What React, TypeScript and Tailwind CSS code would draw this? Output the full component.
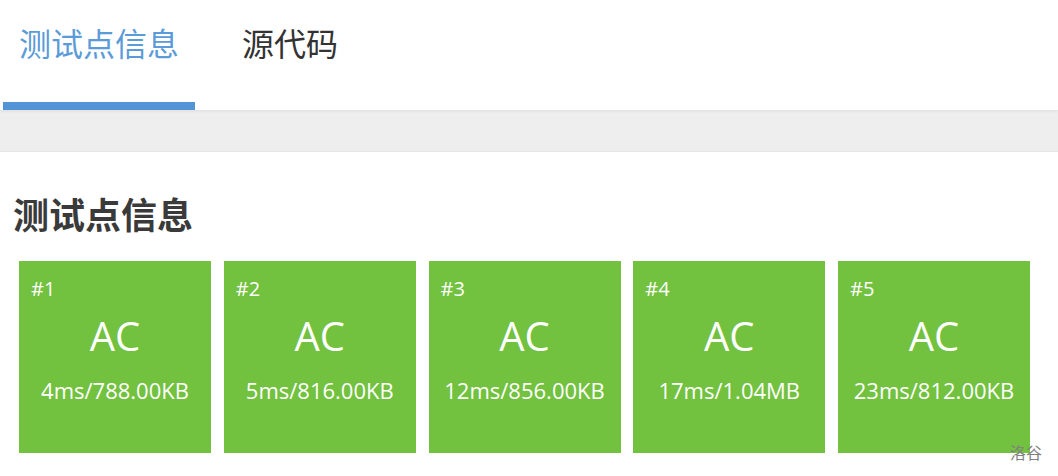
import React from "react";

const cases = [
  { id: 1, info: "4ms/788.00KB" },
  { id: 2, info: "5ms/816.00KB" },
  { id: 3, info: "12ms/856.00KB" },
  { id: 4, info: "17ms/1.04MB" },
  { id: 5, info: "23ms/812.00KB" },
];

const font = { fontFamily: '"Open Sans", "Noto Sans CJK SC", sans-serif' };

export default function App() {
  return (
    <div className="relative w-[1058px] h-[476px] bg-white overflow-hidden" style={font}>
      {/* Tab bar */}
      <div className="relative z-10 flex h-[110px] bg-white pl-[3px] shadow-[0_1px_3px_rgba(0,0,0,0.08)]">
        <div className="flex w-[192px] flex-col justify-between">
          <div className="pl-[16px] pt-[28px] text-[32px] leading-[32px] text-[#5b9bd8]">测试点信息</div>
          <div className="h-[8px] bg-[#5294d6]" />
        </div>
        <div className="ml-[31px] flex flex-col">
          <div className="px-[16px] pt-[28px] text-[32px] leading-[32px] text-[#333]">源代码</div>
        </div>
      </div>
      {/* Gray band */}
      <div className="h-[42px] bg-[#eeeeee] border-b border-[#e6e6e6]" />
      {/* Content */}
      <div className="px-[13px]">
        <h2 className="mt-[46px] text-[36px] font-bold leading-[36px] text-[#3a3a3a]">测试点信息</h2>
        <div className="mt-[27px] flex gap-[12.75px] pl-[6px]">
          {cases.map((c) => (
            <div key={c.id} className="flex h-[192px] w-[192px] flex-col bg-[#72c13f] text-white">
              <div className="pl-[12px] pt-[18px] text-[20px] leading-[20px]">#{c.id}</div>
              <div className="mt-[17px] text-center text-[40px] leading-[40px]">AC</div>
              <div className="mt-[23px] text-center text-[22px] leading-[22px]">{c.info}</div>
            </div>
          ))}
        </div>
      </div>
      <div className="absolute left-[1010px] top-[442px] text-[16px] leading-[20px] text-[#808080]" style={{ fontFamily: '"Noto Sans CJK SC", sans-serif' }}>
        洛谷
      </div>
    </div>
  );
}
